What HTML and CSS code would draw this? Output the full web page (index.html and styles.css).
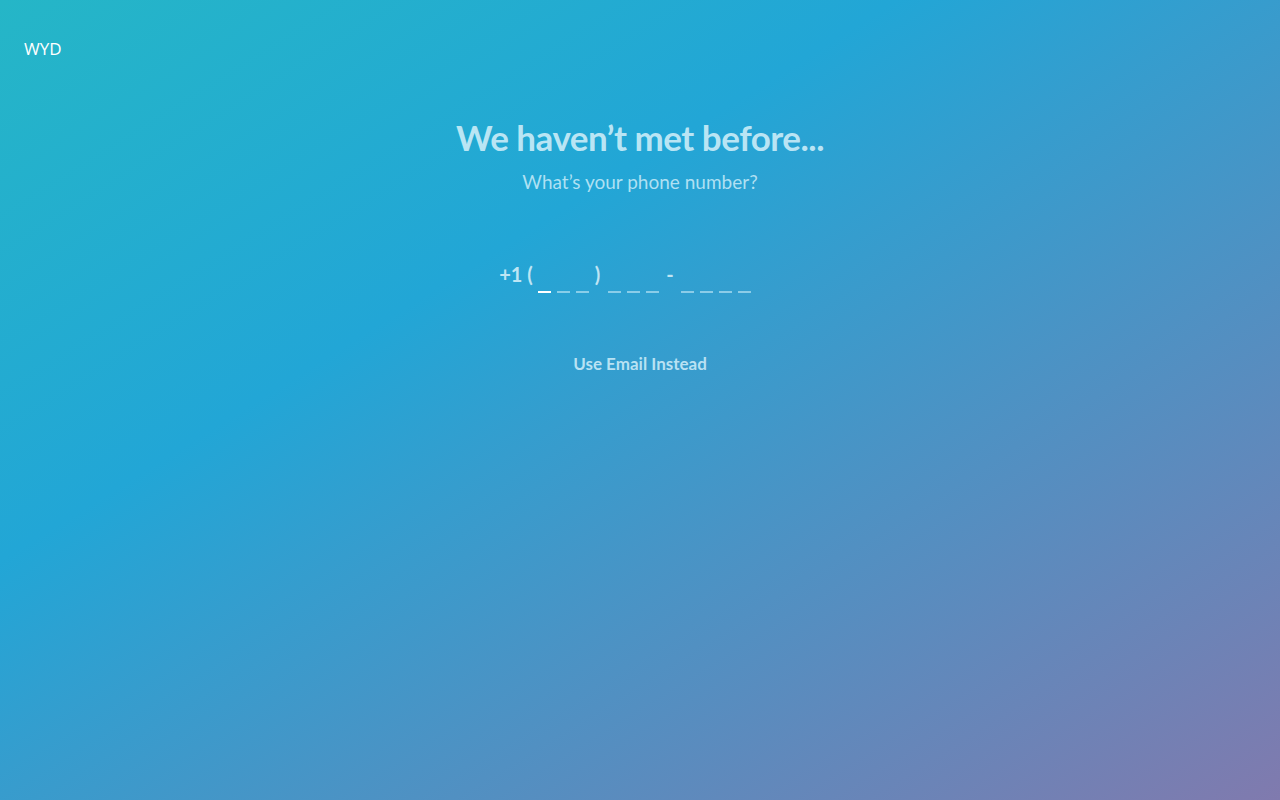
FILE: index.html
```html
<!DOCTYPE html>
<html lang="en">
<head>
<meta charset="utf-8">
<title>WYD</title>
<link rel="stylesheet" href="styles.css">
</head>
<body>
<div class="page">
  <header class="brand">WYD</header>
  <main class="content">
    <h1 class="title">We haven’t met before...</h1>
    <p class="subtitle">What’s your phone number?</p>
    <div class="phone">
      <span class="sym">+1 (</span>
      <span class="group">
        <span class="slot active"></span><span class="slot"></span><span class="slot"></span>
      </span>
      <span class="sym paren">)</span>
      <span class="group">
        <span class="slot"></span><span class="slot"></span><span class="slot"></span>
      </span>
      <span class="sym dash">-</span>
      <span class="group">
        <span class="slot"></span><span class="slot"></span><span class="slot"></span><span class="slot"></span>
      </span>
    </div>
    <a class="alt" href="#">Use Email Instead</a>
  </main>
</div>
</body>
</html>
```
FILE: styles.css
```css
html, body {
  margin: 0;
  padding: 0;
  height: 100%;
}
body {
  font-family: "Lato", "Noto Sans", sans-serif;
}
.page {
  width: 1280px;
  height: 800px;
  box-sizing: border-box;
  background: linear-gradient(to bottom right, #25b6c7 0%, #22a6d6 35%, #807aae 100%);
  padding: 38px 24px 0;
}
.brand {
  font-family: "Open Sans", "Noto Sans", sans-serif;
  color: #ffffff;
  font-size: 17px;
  line-height: 22px;
}
.content {
  display: flex;
  flex-direction: column;
  align-items: center;
  margin-top: 52px;
}
.title {
  margin: 0;
  font-size: 35px;
  font-weight: 700;
  letter-spacing: -0.5px;
  color: rgba(220, 244, 252, 0.82);
  line-height: 50px;
}
.subtitle {
  margin: 7px 0 0;
  font-size: 19px;
  color: rgba(215, 242, 252, 0.78);
  line-height: 26px;
}
.phone {
  display: flex;
  align-items: flex-end;
  margin-top: 65px;
  margin-right: 30px;
  color: rgba(225, 245, 252, 0.82);
  font-size: 20px;
  font-weight: 700;
  height: 34px;
}
.sym {
  line-height: 28px;
  align-self: flex-start;
}
.paren { margin: 0 8px 0 6px; }
.dash { margin: 0 7px 0 7px; }
.group {
  display: flex;
  gap: 6px;
  margin-left: 5px;
  padding-bottom: 1px;
}
.paren + .group, .dash + .group { margin-left: 0; }
.slot {
  width: 13px;
  height: 2px;
  background: rgba(200, 235, 248, 0.6);
}
.slot.active {
  background: #ffffff;
}
.alt {
  margin-top: 58px;
  font-size: 17px;
  font-weight: 700;
  color: rgba(215, 242, 252, 0.82);
  text-decoration: none;
  line-height: 24px;
}
```
